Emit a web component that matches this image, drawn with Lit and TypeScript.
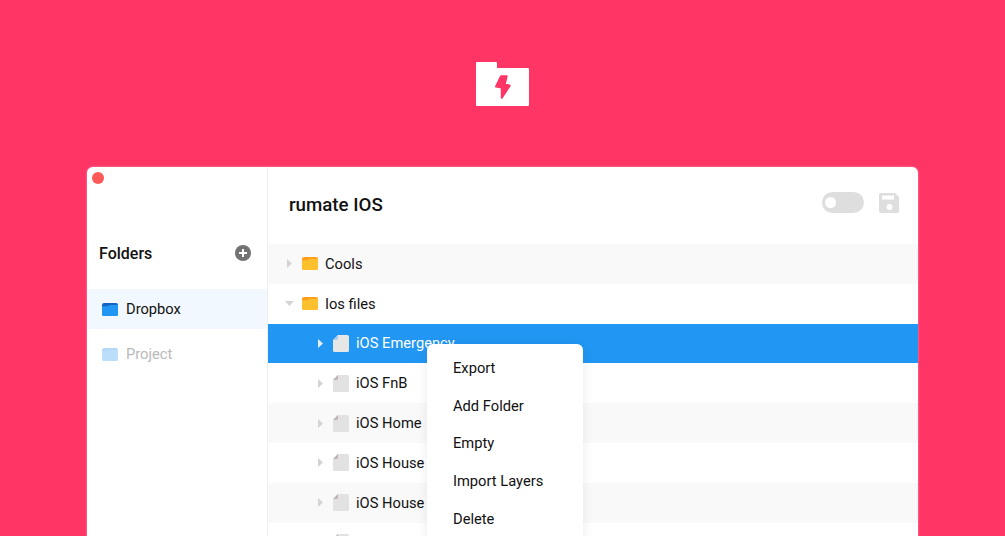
import { LitElement, html, css, svg } from "lit";
import { customElement } from "lit/decorators.js";

const folder = (a: string, b: string) => svg`<svg class="fi" width="16" height="13" viewBox="0 0 16 13"><path d="M2 0H14A2 2 0 0 1 16 2V11A2 2 0 0 1 14 13H2A2 2 0 0 1 0 11V2A2 2 0 0 1 2 0Z" fill="${a}"/><path d="M0 3.2H6L7.5 2H16V11A2 2 0 0 1 14 13H2A2 2 0 0 1 0 11Z" fill="${b}"/></svg>`;
const doc = svg`<svg class="di" width="16" height="17" viewBox="0 0 16 17"><path d="M5 0H14.5A1.5 1.5 0 0 1 16 1.5V15.5A1.5 1.5 0 0 1 14.5 17H1.5A1.5 1.5 0 0 1 0 15.5V5Z" fill="#e2e2e2"/><path d="M5 0V3.6A1.4 1.4 0 0 1 3.6 5H0Z" fill="#bdb3b3"/></svg>`;
const docSel = svg`<svg class="di" width="16" height="17" viewBox="0 0 16 17"><path d="M5 0H14.5A1.5 1.5 0 0 1 16 1.5V15.5A1.5 1.5 0 0 1 14.5 17H1.5A1.5 1.5 0 0 1 0 15.5V5Z" fill="#e6e6e6"/><path d="M5 0V3.6A1.4 1.4 0 0 1 3.6 5H0Z" fill="#a9cdf0"/></svg>`;

@customElement("app-root")
export class AppRoot extends LitElement {
  static styles = css`
    :host { display: block; height: 536px; overflow: hidden; background: #ff3566; font-family: Roboto, "Liberation Sans", sans-serif; color: #111; }
    .top { height: 167px; display: flex; justify-content: center; padding-top: 62px; box-sizing: border-box; }
    .win { position: relative; margin: 0 87px; height: 420px; display: flex; background: #fff; border-radius: 6px 6px 0 0; box-shadow: 0 0 2px rgba(255,255,255,.6); }
    .dot { position: absolute; left: 5px; top: 5px; width: 12px; height: 12px; border-radius: 50%; background: #ff5a57; }
    .side { width: 180px; flex: none; border-right: 1px solid #eeeeee; padding-top: 73px; box-sizing: content-box; }
    .fh { display: flex; align-items: center; justify-content: space-between; padding: 0 16px 0 12px; height: 26px; font-size: 16px; font-weight: 500; }
    .nav { display: flex; align-items: center; gap: 8px; padding-left: 15px; height: 40px; font-size: 14.7px; margin-top: 23px; background: #f1f8ff; }
    .nav.off { margin-top: 2px; background: none; color: #b9b9b9; height: 46px; }
    .main { flex: 1; min-width: 0; }
    .hd { height: 77px; display: flex; align-items: center; padding: 0 19px 1px 21px; box-sizing: border-box; }
    .hd h1 { margin: 0; flex: 1; font-size: 18.7px; font-weight: 500; }
    .hd svg { margin-bottom: 5px; }
    .tog { width: 42px; height: 21px; border-radius: 11px; background: #dedede; margin: 0 15px 5px 0; display: flex; align-items: center; padding-left: 3px; box-sizing: border-box; }
    .tog i { width: 11px; height: 11px; border-radius: 50%; background: #fff; }
    .row { display: flex; align-items: center; height: 39.8px; font-size: 14.7px; background: #fff; padding-left: 19px; }
    .row.alt { background: #f9f9f9; }
    .row.sel { background: #2196f3; color: #fff; }
    .row.sub { padding-left: 50px; }
    .row svg.ar { flex: none; width: 5px; height: 9px; margin-right: 10px; }
    .row svg.dn { flex: none; width: 9px; height: 5px; margin-left: -2px; margin-right: 8px; }
    .row .fi, .row .di { margin-right: 7px; }
    .menu { position: absolute; left: 340px; top: 177px; width: 156px; height: 220px; background: #fff; border-radius: 6px 6px 0 0; box-shadow: 0 2px 12px rgba(0,0,0,.08); padding: 5px 0 0 26px; box-sizing: border-box; font-size: 14.7px; }
    .menu div { height: 37.7px; display: flex; align-items: center; }
  `;

  private arrow(c: string) {
    return svg`<svg class="ar" viewBox="0 0 5 9"><path d="M0 0L5 4.5L0 9Z" fill="${c}"/></svg>`;
  }

  render() {
    const files = ["iOS FnB", "iOS Home", "iOS House", "iOS House", "iOS House"];
    return html`
      <div class="top">
        <svg width="53" height="44" viewBox="0 0 53 44">
          <path d="M1 0H20A1 1 0 0 1 21 1V6H52A1 1 0 0 1 53 7V43A1 1 0 0 1 52 44H1A1 1 0 0 1 0 43V1A1 1 0 0 1 1 0Z" fill="#fff"/>
          <path d="M25 14.3H30.7L28.7 22.3L33.7 23.6L25.8 35.8L25.7 25.6L20 24.6Z" fill="#ff3566" stroke="#ff3566" stroke-width="2" stroke-linejoin="round"/>
        </svg>
      </div>
      <div class="win">
        <span class="dot"></span>
        <div class="side">
          <div class="fh">Folders
            <svg width="16" height="16" viewBox="0 0 16 16"><circle cx="8" cy="8" r="8" fill="#737373"/><path d="M8 4V12M4 8H12" stroke="#fff" stroke-width="2"/></svg>
          </div>
          <div class="nav">${folder("#1565c0", "#2196f3")}Dropbox</div>
          <div class="nav off">${folder("#b5d8f7", "#bbdefb")}Project</div>
        </div>
        <div class="main">
          <div class="hd">
            <h1>rumate IOS</h1>
            <div class="tog"><i></i></div>
            <svg width="20" height="20" viewBox="0 0 20 20"><path d="M2 0H16L20 4V18A2 2 0 0 1 18 20H2A2 2 0 0 1 0 18V2A2 2 0 0 1 2 0Z" fill="#dedede"/><rect x="3" y="2.5" width="12" height="4" fill="#fff"/><circle cx="10.5" cy="14" r="3" fill="#fff"/></svg>
          </div>
          <div class="row alt">${this.arrow("#d4d4d4")}${folder("#ff9f1c", "#ffc02e")}<span>Cools</span></div>
          <div class="row"><svg class="dn" viewBox="0 0 9 5"><path d="M0 0H9L4.5 5Z" fill="#d4d4d4"/></svg>${folder("#ff9f1c", "#ffc02e")}<span>Ios files</span></div>
          <div class="row sub sel">${this.arrow("#e3f0fc")}${docSel}<span>iOS Emergency</span></div>
          ${files.map((f, i) => html`<div class="row sub ${i % 2 ? "alt" : ""}">${this.arrow("#d4d4d4")}${doc}<span>${f}</span></div>`)}
        </div>
        <div class="menu">
          <div>Export</div><div>Add Folder</div><div>Empty</div><div>Import Layers</div><div>Delete</div>
        </div>
      </div>
    `;
  }
}
